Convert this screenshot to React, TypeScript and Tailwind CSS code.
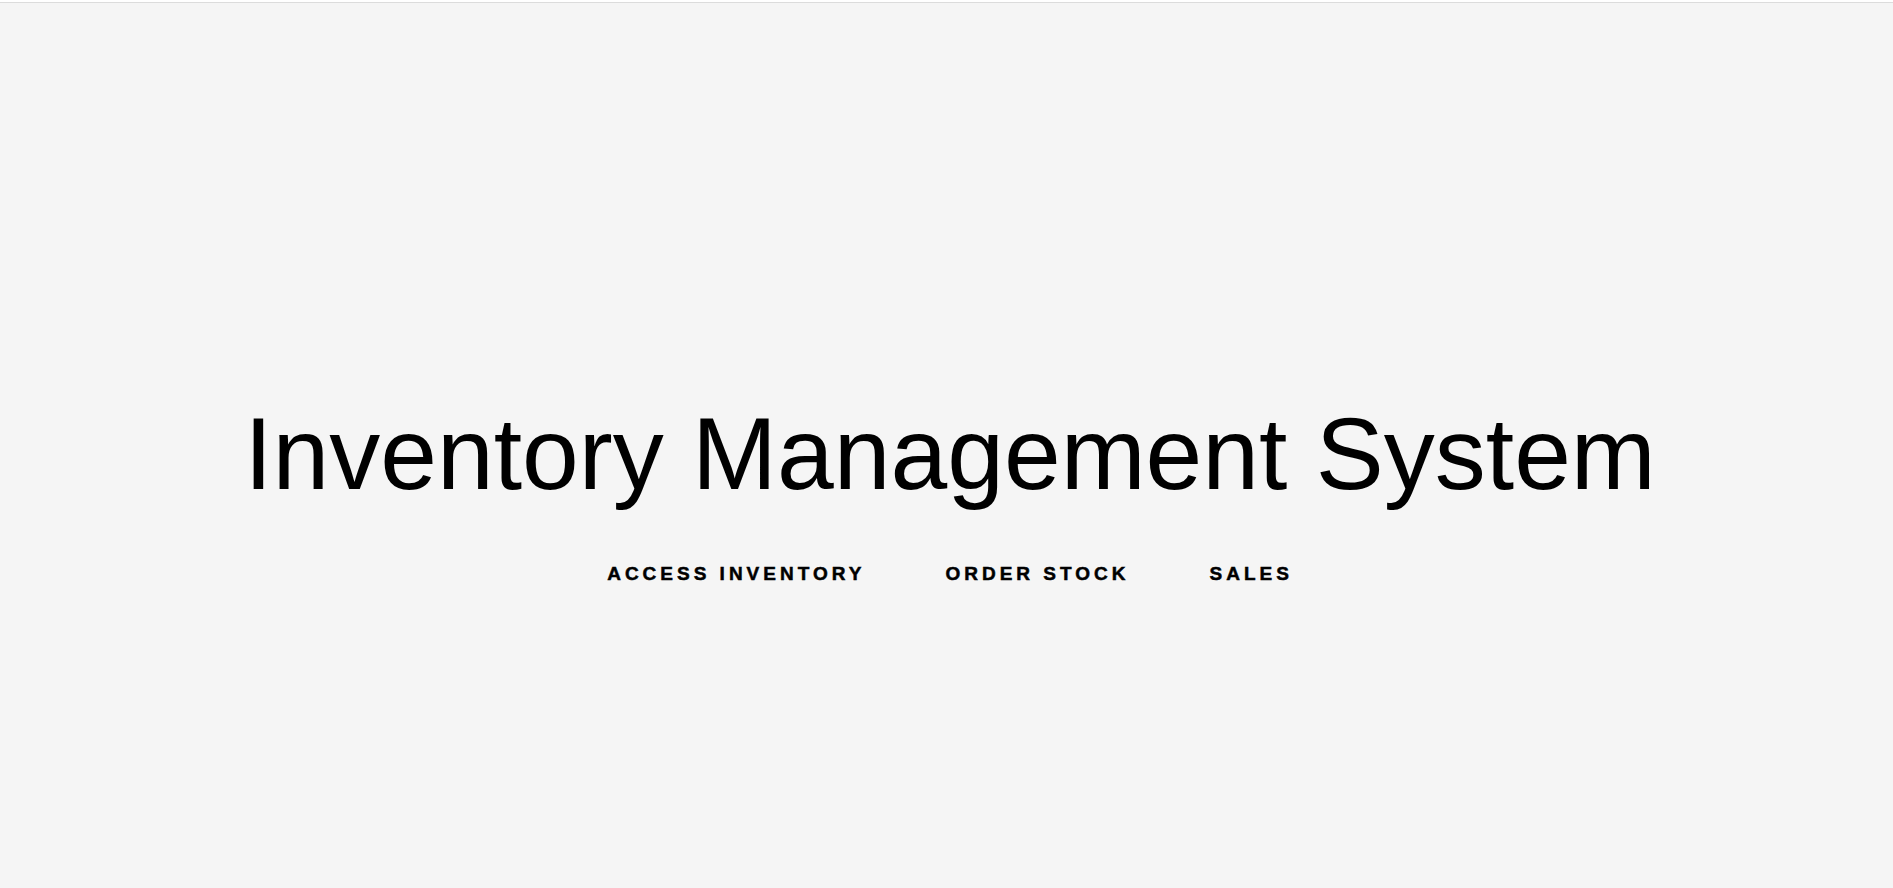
const NAV_ITEMS = ['Access Inventory', 'Order Stock', 'Sales']

export default function App() {
  return (
    <div className="min-h-[888px] bg-white pt-[2px] font-['Liberation_Sans',Arial,sans-serif] text-black">
      <div className="min-h-[886px] border-t border-[#dcdcdc] bg-[#f5f5f5]">
        <main className="flex flex-col items-center pl-[7px] pt-[400px]">
          <h1 className="text-[102px] font-normal leading-none">Inventory Management System</h1>
          <nav className="mt-[59px] flex gap-[80px]">
            {NAV_ITEMS.map((item) => (
              <a
                key={item}
                href="#"
                className="text-[19px] font-bold uppercase leading-none tracking-[4px] text-black [-webkit-text-stroke:0.5px_black]"
              >
                {item}
              </a>
            ))}
          </nav>
        </main>
      </div>
    </div>
  )
}
